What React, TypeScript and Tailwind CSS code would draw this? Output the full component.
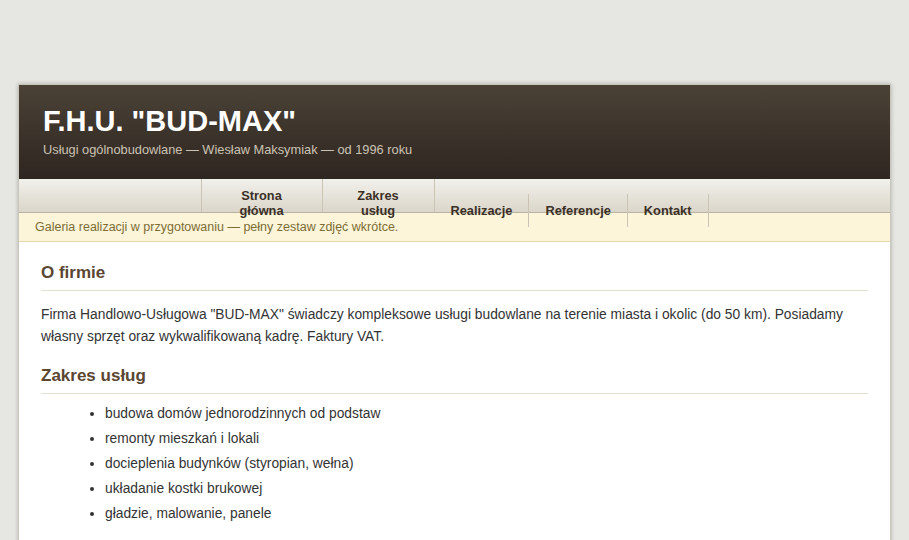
export default function App() {
  const uslugi = [
    "budowa domów jednorodzinnych od podstaw",
    "remonty mieszkań i lokali",
    "docieplenia budynków (styropian, wełna)",
    "układanie kostki brukowej",
    "gładzie, malowanie, panele",
  ];

  return (
    <main className="min-h-screen bg-[#e6e6e2] pt-[84px] font-['Liberation_Sans',Arial,sans-serif]">
      <div className="ml-[18px] w-[873px] border border-[#c9c6bc] bg-white shadow-[0_0_4px_rgba(0,0,0,0.25)]">
        {/* naglowek */}
        <header className="h-[94px] bg-gradient-to-b from-[#4b4237] to-[#2e2620] px-6 pt-[19px]">
          <h1 className="text-[29px] font-bold leading-[34px] text-white">F.H.U. "BUD-MAX"</h1>
          <p className="mt-[4px] text-[12.8px] leading-[16px] text-[#cbc2b4]">
            Usługi ogólnobudowlane — Wiesław Maksymiak — od 1996 roku
          </p>
        </header>

        {/* menu */}
        <nav className="h-[34px] border-b border-[#bab3a3] bg-gradient-to-b from-[#f1f0eb] to-[#dbd6ca] text-center text-[12.8px] font-bold leading-[15px] text-[#3a3026]">
          <a className="inline-block h-[33px] w-[122px] border-x border-[#cbc3b3] px-4 pt-[9px] align-baseline">
            Strona główna
          </a>
          <a className="inline-block h-[33px] w-[112px] border-r border-[#cbc3b3] px-[18px] pt-[9px] align-baseline">
            Zakres usług
          </a>
          <a className="inline-block h-[33px] border-r border-[#cbc3b3] px-4 pt-[9px] align-baseline">Realizacje</a>
          <a className="inline-block h-[33px] border-r border-[#cbc3b3] px-4 pt-[9px] align-baseline">Referencje</a>
          <a className="inline-block h-[33px] border-r border-[#cbc3b3] px-4 pt-[9px] align-baseline">Kontakt</a>
        </nav>

        {/* komunikat */}
        <div className="border-b border-[#e4d9a9] bg-[#fcf5da] px-4 py-[6px] text-[12.5px] leading-[16px] text-[#7d6c33]">
          Galeria realizacji w przygotowaniu — pełny zestaw zdjęć wkrótce.
        </div>

        {/* tresc */}
        <section className="px-[22px] pt-[21px] pb-8 text-[13.8px] leading-[22px] text-[#333]">
          <h2 className="border-b border-[#e3dfcf] pb-[7px] text-[17px] font-bold leading-[20px] text-[#5a4631]">O firmie</h2>
          <p className="mt-[13px]">
            Firma Handlowo-Usługowa "BUD-MAX" świadczy kompleksowe usługi budowlane na terenie miasta i okolic (do 50 km). Posiadamy
            własny sprzęt oraz wykwalifikowaną kadrę. Faktury VAT.
          </p>

          <h2 className="mt-[18px] border-b border-[#e3dfcf] pb-[7px] text-[17px] font-bold leading-[20px] text-[#5a4631]">
            Zakres usług
          </h2>
          <ul className="mt-[7px] list-disc pl-[64px]">
            {uslugi.map((u) => (
              <li key={u} className="leading-[25px]">
                {u}
              </li>
            ))}
          </ul>
        </section>
      </div>
    </main>
  );
}
